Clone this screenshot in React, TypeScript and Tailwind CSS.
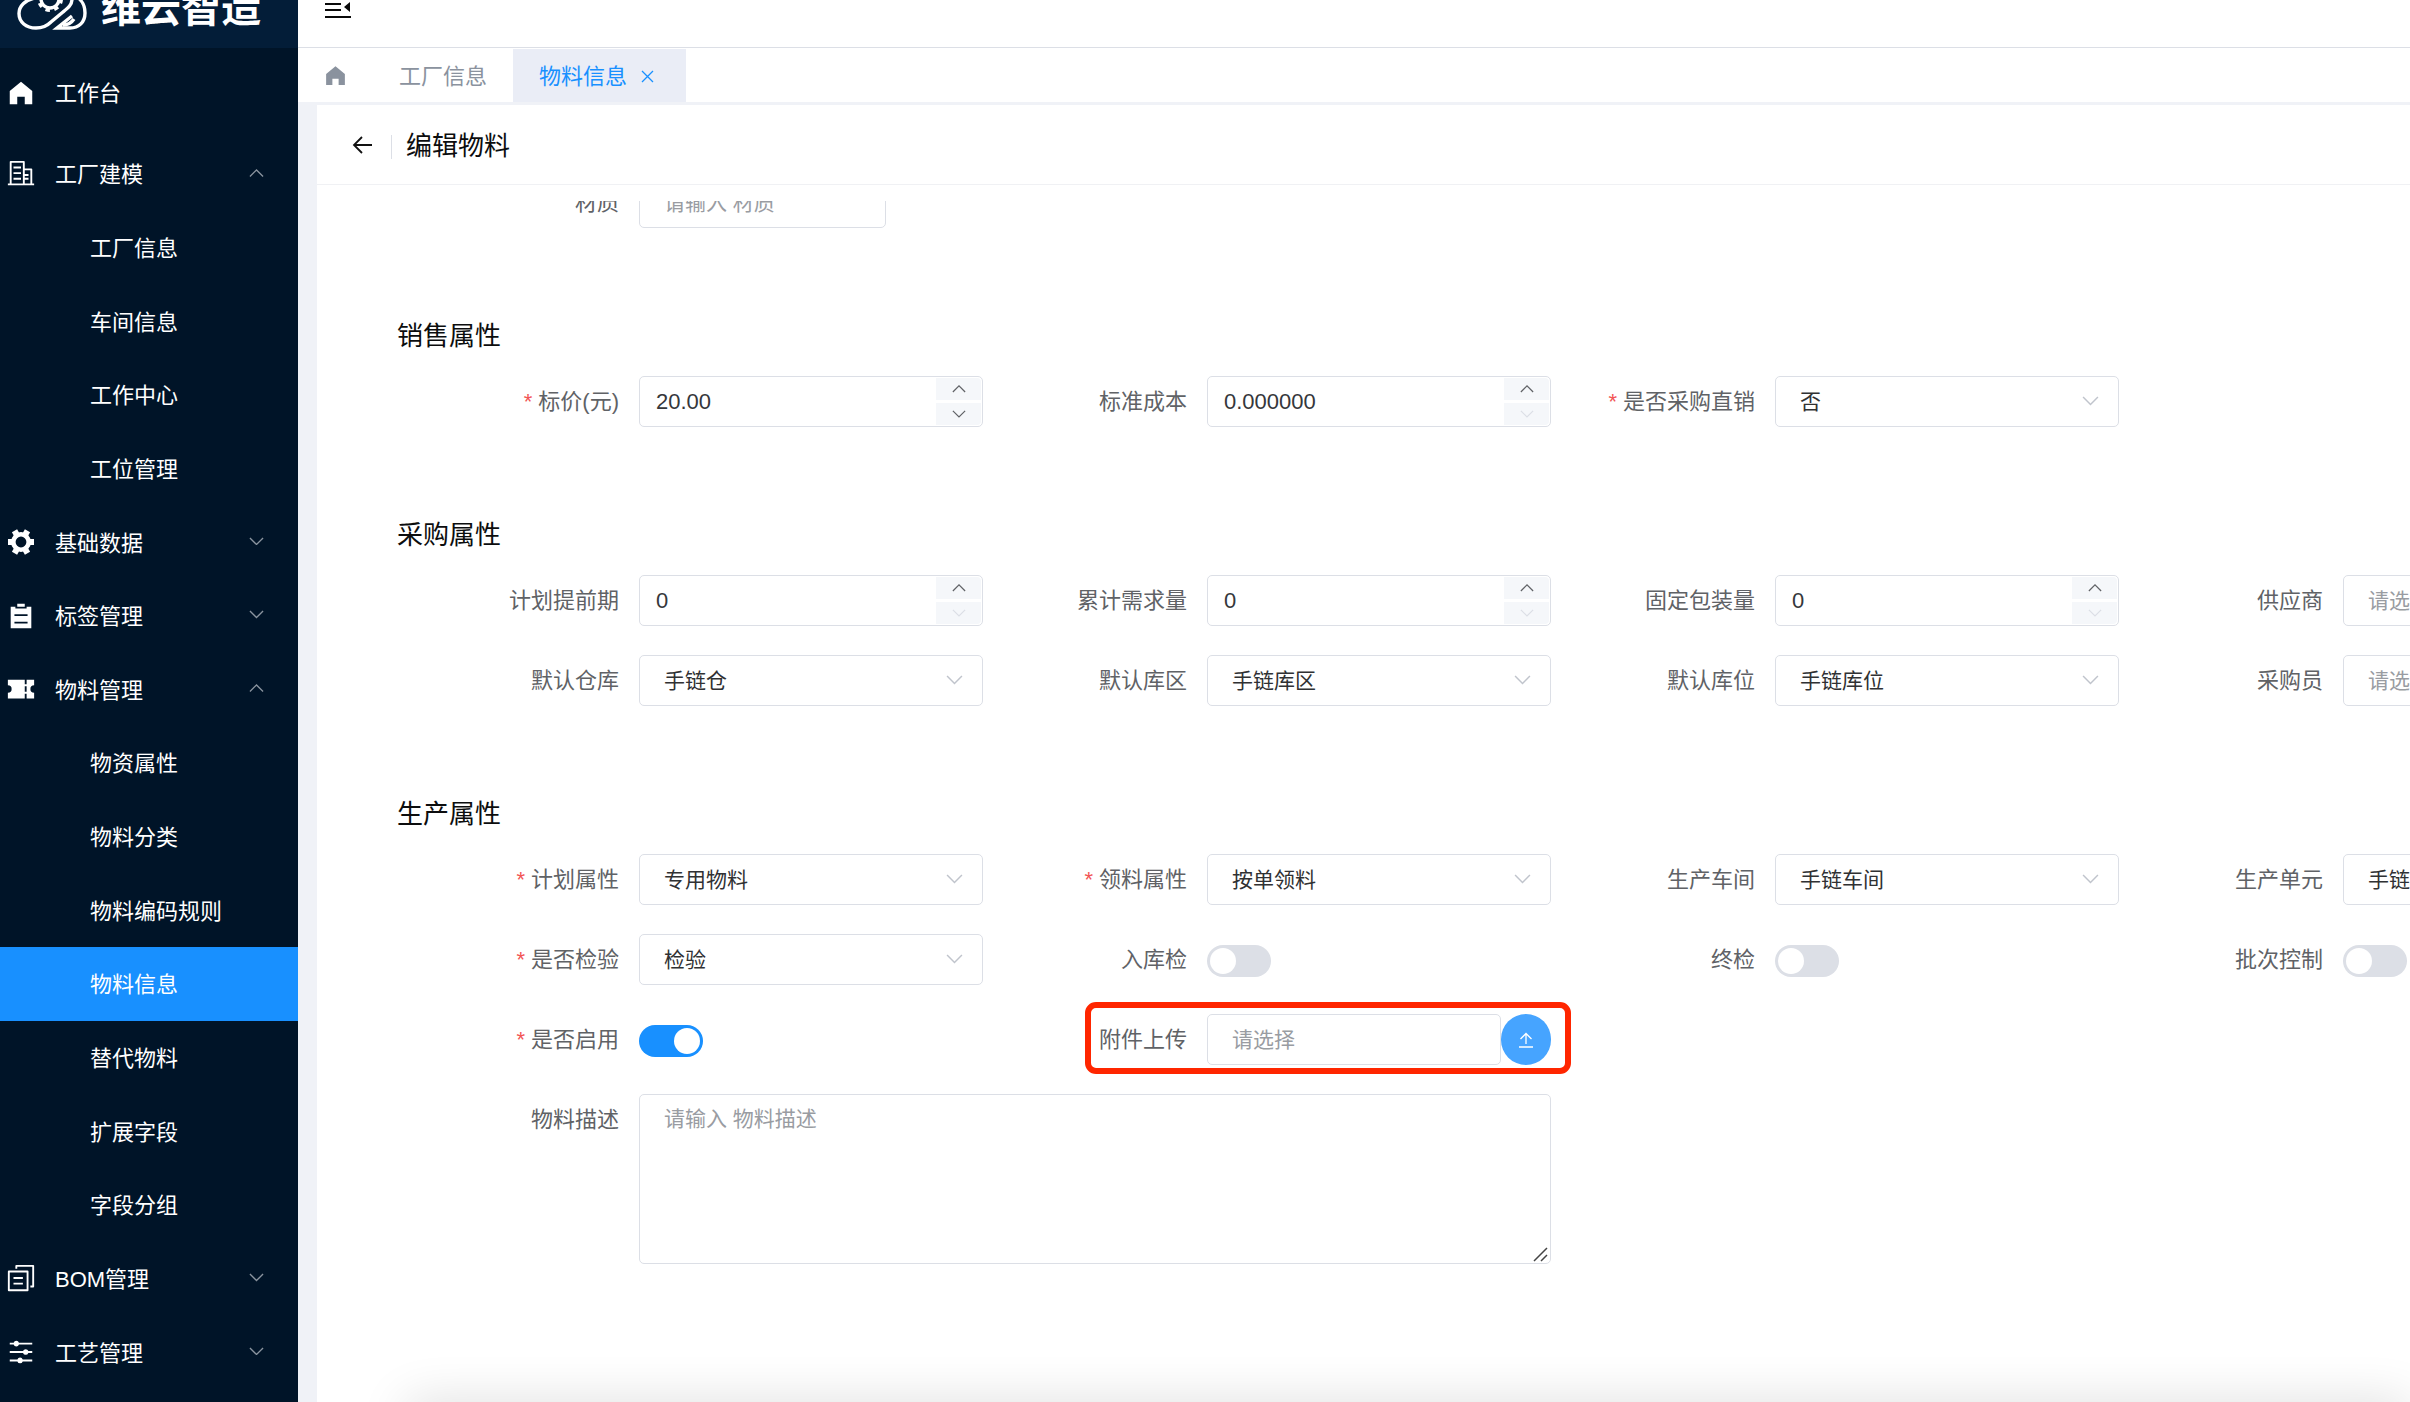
import React from "react";

const ICONS = {
  home: "M512 128 128 447.936V896h255.936V640H640v256h255.936V447.936z",
  office:
    "M192 128v704h384V128H192zm-32-64h448a32 32 0 0 1 32 32v768a32 32 0 0 1-32 32H160a32 32 0 0 1-32-32V96a32 32 0 0 1 32-32z M256 256h256v64H256v-64zm0 192h256v64H256v-64zm0 192h256v64H256v-64zm384-128h128v64H640v-64zm0 128h128v64H640v-64zM64 832h896v64H64v-64z M640 384v448h192V384H640zm-32-64h256a32 32 0 0 1 32 32v512a32 32 0 0 1-32 32H608a32 32 0 0 1-32-32V352a32 32 0 0 1 32-32z",
  list: "M704 192h160v736H160V192h160v64h384v-64zM288 512h448v-64H288v64zm0 256h448v-64H288v64zm96-576V96h256v96H384z",
  ticket:
    "M640 832H64V640a128 128 0 1 0 0-256V192h576v160h64V192h256v192a128 128 0 1 0 0 256v192H704V672h-64v160zm0-416v192h64V416h-64z",
  copy: "M128 320v576h576V320H128zm-32-64h640a32 32 0 0 1 32 32v640a32 32 0 0 1-32 32H96a32 32 0 0 1-32-32V288a32 32 0 0 1 32-32zM960 96v704a32 32 0 0 1-32 32h-96v-64h64V128H384v64h-64V96a32 32 0 0 1 32-32h576a32 32 0 0 1 32 32zM256 672h320v64H256v-64zm0-192h320v64H256v-64z",
  operation:
    "M389.44 768a96.064 96.064 0 0 1 181.12 0H896v64H570.56a96.064 96.064 0 0 1-181.12 0H128v-64h261.44zm192-288a96.064 96.064 0 0 1 181.12 0H896v64H762.56a96.064 96.064 0 0 1-181.12 0H128v-64h453.44zm-320-288a96.064 96.064 0 0 1 181.12 0H896v64H442.56a96.064 96.064 0 0 1-181.12 0H128v-64h133.44z",
};

type IconName = keyof typeof ICONS | "gear";

function Icon({ name, className }: { name: IconName; className: string }) {
  if (name === "gear") {
    return (
      <svg viewBox="0 0 30 30" className={className} fill="currentColor" aria-hidden="true">
        <circle cx="15" cy="15" r="7.7" fill="none" stroke="currentColor" strokeWidth="4.6" />
        {[0, 60, 120].map((a) => (
          <path key={a} transform={`rotate(${a} 15 15)`} d="M2 12h4v6H2zM24 12h4v6h-4z" />
        ))}
      </svg>
    );
  }
  return (
    <svg viewBox="0 0 1024 1024" className={className} fill="currentColor" aria-hidden="true">
      <path d={ICONS[name]} />
    </svg>
  );
}

function Chevron({ up, className }: { up?: boolean; className: string }) {
  return (
    <svg viewBox="0 0 16 9" className={className} fill="none" stroke="currentColor" strokeWidth="1.4" aria-hidden="true">
      <path d={up ? "M1 8 8 1l7 7" : "M1 1l7 7 7-7"} />
    </svg>
  );
}

type MenuRow = { label: string; icon?: IconName; open?: boolean; active?: boolean };

const MENU: MenuRow[] = [
  { label: "工厂建模", icon: "office", open: true },
  { label: "工厂信息" },
  { label: "车间信息" },
  { label: "工作中心" },
  { label: "工位管理" },
  { label: "基础数据", icon: "gear" },
  { label: "标签管理", icon: "list" },
  { label: "物料管理", icon: "ticket", open: true },
  { label: "物资属性" },
  { label: "物料分类" },
  { label: "物料编码规则" },
  { label: "物料信息", active: true },
  { label: "替代物料" },
  { label: "扩展字段" },
  { label: "字段分组" },
  { label: "BOM管理", icon: "copy" },
  { label: "工艺管理", icon: "operation" },
];

function Sidebar() {
  return (
    <aside className="flex w-[298px] shrink-0 flex-col bg-[#001428] text-[22px] text-white">
      <div className="flex h-12 shrink-0 items-end overflow-hidden bg-[#031d38]">
        <div className="flex h-20 items-center gap-[14px] pl-[17px]">
          <svg viewBox="0 0 70 46" className="h-[46px] w-[70px]" fill="none" stroke="currentColor" strokeWidth="3.4" aria-hidden="true">
            <path d="M18 13C8 15 2 21 2 28.500C2 37 9 43 19 43C25 43 30 41 34 37L46 27C51 23 55 20 55 14C55 7 48 2 39 2C30 2 22 7 20 14" />
            <path d="M52 9C62 11 68 18 68 28C68 37 62 43 53 43H40L55 31" />
            <path d="M46 40C51 40 55 37 57 34" />
            <circle cx="33" cy="14" r="9" />
            <circle cx="33" cy="14" r="11.500" strokeWidth="3" strokeDasharray="4.500 4.530" />
          </svg>
          <span className="text-[40px] leading-none font-bold whitespace-nowrap">维云智造</span>
        </div>
      </div>
      <nav className="flex min-h-0 flex-1 flex-col pb-[13px]">
        <a href="#home" className="flex h-[89px] shrink-0 items-center gap-[19px] pl-[6px]">
          <Icon name="home" className="size-[30px]" />
          <span className="pt-0.5">工作台</span>
        </a>
        {MENU.map((m) =>
          m.icon ? (
            <button key={m.label} type="button" className="flex flex-1 items-center gap-[19px] pr-[34px] pl-[6px] text-left">
              <Icon name={m.icon} className="size-[30px]" />
              <span className="flex-1 pt-0.5">{m.label}</span>
              <Chevron up={m.open} className="mb-0.5 w-[15px] text-[#8a949f]" />
            </button>
          ) : (
            <a
              key={m.label}
              href="#menu"
              className={m.active ? "flex flex-1 items-center bg-[#1890ff] pl-[90px]" : "flex flex-1 items-center pl-[90px]"}
            >
              <span className="pt-0.5">{m.label}</span>
            </a>
          )
        )}
      </nav>
    </aside>
  );
}

function Field({
  id,
  label,
  required,
  className,
  children,
}: {
  id: string;
  label: string;
  required?: boolean;
  className?: string;
  children: React.ReactNode;
}) {
  return (
    <div className={className ?? "relative grid grid-cols-[224px_minmax(0,1fr)]"}>
      <label htmlFor={id} className="flex h-[51px] items-center justify-end gap-[6px] pr-5 text-[22px] text-[#606266]">
        {required && <span className="text-[#f25555]">*</span>}
        {label}
      </label>
      {children}
    </div>
  );
}

type BaseProps = { id: string; label: string; required?: boolean };

function NumberField({ value, noDown, ...f }: BaseProps & { value: string; noDown?: boolean }) {
  return (
    <Field {...f}>
      <div className="flex h-[51px] rounded-[5px] border border-[#dcdfe6] pr-px">
        <input id={f.id} defaultValue={value} className="min-w-0 flex-1 pl-4 text-[22px] text-[#35373b] outline-none" />
        <div className="flex w-[45px] shrink-0 flex-col gap-[3px] py-px">
          <button type="button" aria-label="增加" className="flex flex-1 items-center justify-center rounded-tr-[4px] bg-[#f5f7fa] text-[#606266]">
            <Chevron up className="w-[14px]" />
          </button>
          <button
            type="button"
            aria-label="减少"
            disabled={noDown}
            className="flex flex-1 items-center justify-center rounded-br-[4px] bg-[#f5f7fa] text-[#606266] disabled:text-[#dcdfe6]"
          >
            <Chevron className="w-[14px]" />
          </button>
        </div>
      </div>
    </Field>
  );
}

function SelectField({ value, placeholder, ...f }: BaseProps & { value?: string; placeholder?: string }) {
  return (
    <Field {...f}>
      <div className="relative">
        <select
          id={f.id}
          className={
            value
              ? "block h-[51px] w-full appearance-none rounded-[5px] border border-[#dcdfe6] bg-white pl-6 text-[21px] text-[#303133]"
              : "block h-[51px] w-full appearance-none rounded-[5px] border border-[#dcdfe6] bg-white pl-6 text-[21px] text-[#999ca2]"
          }
        >
          <option>{value ?? placeholder}</option>
        </select>
        <Chevron className="pointer-events-none absolute top-5 right-5 w-[17px] text-[#c0c4cc]" />
      </div>
    </Field>
  );
}

function SwitchField({ on, ...f }: BaseProps & { on?: boolean }) {
  return (
    <Field {...f}>
      <div className="flex items-start pt-[11px]">
        <input
          id={f.id}
          type="checkbox"
          role="switch"
          defaultChecked={on}
          className="flex h-8 w-16 appearance-none items-center rounded-full bg-[#dcdfe6] px-[3px] before:size-[26px] before:rounded-full before:bg-white before:content-[''] checked:justify-end checked:bg-[#1890ff]"
        />
      </div>
    </Field>
  );
}

function Section({ title, children }: { title: string; children: React.ReactNode }) {
  return (
    <section className="pt-[88px]">
      <h2 className="h-10 pl-20 text-[26px] leading-10 text-[#0c0d0e]">{title}</h2>
      <div className="mt-5 ml-[98px] grid grid-cols-4 gap-y-[29px]">{children}</div>
    </section>
  );
}

export default function App() {
  return (
    <div className="flex h-screen overflow-hidden bg-[#f0f2f7] font-['Liberation_Sans','Noto_Sans_CJK_SC',sans-serif]">
      <Sidebar />
      <div className="flex min-w-0 flex-1 flex-col">
        <header className="flex h-12 shrink-0 items-end overflow-hidden border-b border-[#dcdfe6] bg-white">
          <div className="flex h-20 items-center pl-[27px]">
            <button type="button" aria-label="收起菜单">
              <svg viewBox="0 0 26 24" className="block h-6 w-[26px]" fill="#0a0a0a" aria-hidden="true">
                <path d="M0 1h26v2H0zM0 8h16v2H0zM0 14h16v2H0zM0 21h26v2H0zM25 7v10l-6-5z" />
              </svg>
            </button>
          </div>
        </header>
        <nav className="flex h-[54px] shrink-0 items-stretch bg-white pt-px text-[22px] text-[#8a929e]">
          <a href="#home" aria-label="首页" className="flex w-[75px] items-center justify-center">
            <Icon name="home" className="size-[25px]" />
          </a>
          <a href="#factory" className="flex items-center px-[26px] pt-0.5">
            工厂信息
          </a>
          <div className="flex items-center gap-[14px] bg-[#eaedf6] pt-0.5 pr-[32px] pl-[26px] text-[#1890ff]">
            <a href="#material">物料信息</a>
            <button type="button" aria-label="关闭">
              <svg viewBox="0 0 13 13" className="block size-[13px]" stroke="currentColor" strokeWidth="1.3" aria-hidden="true">
                <path d="M1 1l11 11M12 1 1 12" />
              </svg>
            </button>
          </div>
        </nav>
        <main className="relative mt-[3px] ml-[19px] flex min-h-0 flex-1 flex-col overflow-hidden bg-white">
          <div className="flex h-20 shrink-0 items-center border-b border-[#f0f1f4] pl-[35px]">
            <button type="button" aria-label="返回">
              <svg viewBox="0 0 22 22" className="block size-[22px]" fill="none" stroke="#111" strokeWidth="1.8" aria-hidden="true">
                <path d="M20 11H2M10 3l-8 8 8 8" />
              </svg>
            </button>
            <span className="mt-1 ml-[17px] h-6 w-px bg-[#dcdfe6]" />
            <h1 className="ml-[14px] pt-0.5 text-[26px] leading-10 text-[#0c0d0e]">编辑物料</h1>
          </div>

          <div className="mt-4 min-h-0 flex-1 overflow-hidden">
            <form className="-mt-6 w-[calc(100%+277px)]">
              <div className="ml-[98px] grid grid-cols-4">
                <Field id="texture" label="材质">
                  <input
                    id="texture"
                    placeholder="请输入 材质"
                    className="h-[51px] w-[247px] rounded-[5px] border border-[#dcdfe6] pl-6 text-[21px] placeholder:text-[#999ca2]"
                  />
                </Field>
              </div>

              <Section title="销售属性">
                <NumberField id="price" label="标价(元)" required value="20.00" />
                <NumberField id="cost" label="标准成本" value="0.000000" noDown />
                <SelectField id="direct" label="是否采购直销" required value="否" />
              </Section>

              <Section title="采购属性">
                <NumberField id="lead" label="计划提前期" value="0" noDown />
                <NumberField id="demand" label="累计需求量" value="0" noDown />
                <NumberField id="pack" label="固定包装量" value="0" noDown />
                <SelectField id="supplier" label="供应商" placeholder="请选择" />
                <SelectField id="warehouse" label="默认仓库" value="手链仓" />
                <SelectField id="area" label="默认库区" value="手链库区" />
                <SelectField id="slot" label="默认库位" value="手链库位" />
                <SelectField id="buyer" label="采购员" placeholder="请选择" />
              </Section>

              <Section title="生产属性">
                <SelectField id="plan" label="计划属性" required value="专用物料" />
                <SelectField id="pick" label="领料属性" required value="按单领料" />
                <SelectField id="workshop" label="生产车间" value="手链车间" />
                <SelectField id="unit" label="生产单元" value="手链单元" />
                <SelectField id="inspect" label="是否检验" required value="检验" />
                <SwitchField id="inbound" label="入库检" />
                <SwitchField id="final" label="终检" />
                <SwitchField id="batch" label="批次控制" />
                <SwitchField id="enabled" label="是否启用" required on />
                <Field id="attachment" label="附件上传">
                  <div className="flex">
                    <input
                      id="attachment"
                      placeholder="请选择"
                      className="h-[51px] min-w-0 flex-1 rounded-[5px] border border-[#dcdfe6] pl-6 text-[21px] placeholder:text-[#999ca2]"
                    />
                    <button type="button" aria-label="上传" className="flex h-[51px] w-[50px] shrink-0 items-center justify-center rounded-full bg-[#46a4ff] text-white">
                      <svg viewBox="0 0 16 16" className="size-4" fill="none" stroke="currentColor" strokeWidth="1.3" aria-hidden="true">
                        <path d="M8 12V1.500M2.500 7 8 1.500 13.500 7M1 15h14" />
                      </svg>
                    </button>
                  </div>
                  <div className="pointer-events-none absolute -top-3 -right-5 -bottom-[9px] left-[102px] rounded-[11px] border-6 border-[#ff2600]" />
                </Field>
                <Field id="desc" label="物料描述" className="col-span-2 col-start-1 grid grid-cols-[224px_minmax(0,1fr)]">
                  <div className="relative">
                    <textarea
                      id="desc"
                      placeholder="请输入 物料描述"
                      className="block h-[170px] w-full resize-none rounded-[5px] border border-[#dcdfe6] px-6 py-2 text-[21px] leading-8 placeholder:text-[#999ca2]"
                    />
                    <svg viewBox="0 0 15 15" className="pointer-events-none absolute right-[3px] bottom-[2px] size-[15px]" stroke="#444" strokeWidth="1.5" aria-hidden="true">
                      <path d="M1 14 14 1M8 14l6-6" />
                    </svg>
                  </div>
                </Field>
              </Section>
            </form>
          </div>
          <div className="pointer-events-none absolute top-full right-0 left-[90px] h-10 shadow-[0_0_50px_rgba(0,0,0,0.14)]" />
        </main>
      </div>
    </div>
  );
}
